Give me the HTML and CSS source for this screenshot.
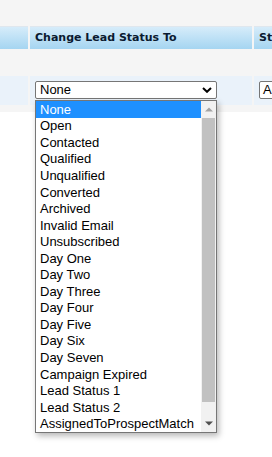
FILE: index.html
```html
<!DOCTYPE html>
<html>
<head>
<meta charset="utf-8">
<link rel="stylesheet" href="styles.css">
</head>
<body>
<div class="band">
  <div class="hrow">
    <div class="hcell c1"></div>
    <div class="hcell c2">Change Lead Status To</div>
    <div class="hcell c3">Status</div>
  </div>
  <div class="drow">
    <div class="dcell c1"></div>
    <div class="dcell c2">
      <div class="sel">
        <span>None</span>
        <svg class="chev" width="10" height="6" viewBox="0 0 10 6"><path d="M1 1 L5 4.8 L9 1" fill="none" stroke="#000" stroke-width="2"/></svg>
      </div>
    </div>
    <div class="dcell c3">
      <div class="sel sel3"><span>Active</span></div>
    </div>
  </div>
</div>

<div class="popup">
  <div class="opts">
    <div class="opt on">None</div>
    <div class="opt">Open</div>
    <div class="opt">Contacted</div>
    <div class="opt">Qualified</div>
    <div class="opt">Unqualified</div>
    <div class="opt">Converted</div>
    <div class="opt">Archived</div>
    <div class="opt">Invalid Email</div>
    <div class="opt">Unsubscribed</div>
    <div class="opt">Day One</div>
    <div class="opt">Day Two</div>
    <div class="opt">Day Three</div>
    <div class="opt">Day Four</div>
    <div class="opt">Day Five</div>
    <div class="opt">Day Six</div>
    <div class="opt">Day Seven</div>
    <div class="opt">Campaign Expired</div>
    <div class="opt">Lead Status 1</div>
    <div class="opt">Lead Status 2</div>
    <div class="opt">AssignedToProspectMatch</div>
  </div>
  <div class="sbar">
    <div class="sbtn"><svg width="8" height="5" viewBox="0 0 8 5"><path d="M0 4.5 L4 0.5 L8 4.5Z" fill="#a3a3a3"/></svg></div>
    <div class="thumb"></div>
    <div class="track"></div>
    <div class="sbtn"><svg width="8" height="5" viewBox="0 0 8 5"><path d="M0 0.5 L4 4.5 L8 0.5Z" fill="#505050"/></svg></div>
  </div>
</div>
</body>
</html>
```

FILE: styles.css
```css
html, body {
  margin: 0;
  padding: 0;
  overflow: hidden;
  background: #ffffff;
}
body {
  width: 272px;
  height: 457px;
  position: relative;
  font-family: "Liberation Sans", Arial, sans-serif;
}
.band {
  background: #f5f5f5;
  height: 112px;
  padding-top: 26px;
  box-sizing: border-box;
}
.hrow, .drow {
  display: flex;
  gap: 2px;
}
.hrow {
  height: 23px;
}
.hcell {
  box-sizing: border-box;
  border-top: 1px solid #dfe7ee;
  background: linear-gradient(#d6ecfa, #a5d5f1);
  font-family: "DejaVu Sans", Verdana, sans-serif;
  font-weight: bold;
  font-size: 11px;
  line-height: 21px;
  color: #0b1a30;
  padding-left: 5px;
  white-space: nowrap;
  overflow: hidden;
}
.c1 { width: 28px; flex: none; }
.c2 { width: 222px; flex: none; }
.c3 { flex: 1; min-width: 0; }
.drow {
  margin-top: 27px;
  height: 29px;
}
.dcell {
  background: #eaf2fa;
  box-sizing: border-box;
  padding: 5px 0 0 5px;
  overflow: hidden;
}
.sel {
  box-sizing: border-box;
  width: 182px;
  height: 18px;
  border: 1px solid #767676;
  border-radius: 2px;
  background: #fff;
  display: flex;
  align-items: center;
  justify-content: space-between;
  padding: 0 4px 0 4px;
  font-size: 13px;
  color: #000;
  line-height: 16px;
}
.chev {
  display: block;
}
.sel3 {
  width: 60px;
  padding-left: 3px;
}
.popup {
  position: absolute;
  left: 35px;
  top: 100px;
  width: 182px;
  height: 333px;
  box-sizing: border-box;
  border: 1px solid #767676;
  background: #fff;
  box-shadow: 2px 3px 6px rgba(0, 0, 0, 0.28);
  display: flex;
}
.opts {
  flex: 1;
  display: flex;
  flex-direction: column;
  font-size: 13px;
  color: #000;
}
.opt {
  flex: 1;
  display: flex;
  align-items: center;
  padding-left: 4px;
  white-space: nowrap;
  overflow: hidden;
}
.opt.on {
  background: #1e90ff;
  color: #fff;
}
.sbar {
  width: 15px;
  flex: none;
  background: #f1f1f1;
  display: flex;
  flex-direction: column;
}
.sbtn {
  height: 17px;
  flex: none;
  display: flex;
  align-items: center;
  justify-content: center;
}
.sbtn svg { display: block; }
.thumb {
  height: 284px;
  flex: none;
  background: #c1c1c1;
  margin: 0 1px 0 1px;
}
.track {
  flex: 1;
}
```
